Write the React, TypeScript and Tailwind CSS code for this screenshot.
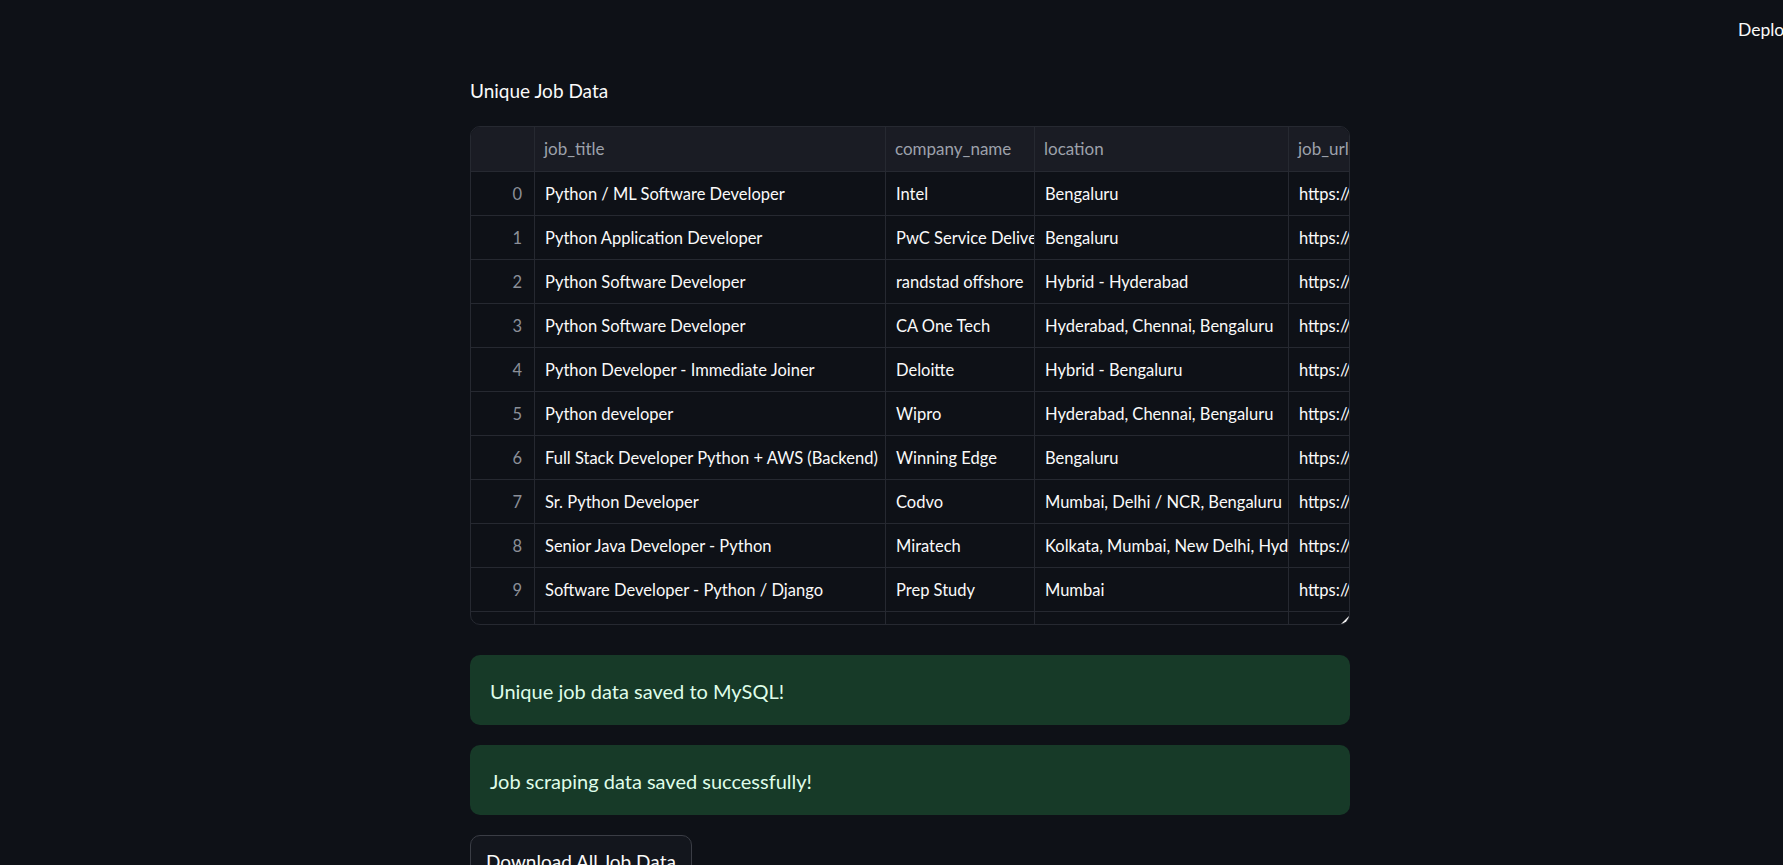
import React from 'react';

interface JobRow {
  title: string;
  company: string;
  location: string;
  url: string;
}

const rows: JobRow[] = [
  { title: 'Python / ML Software Developer', company: 'Intel', location: 'Bengaluru', url: 'https://www.naukri.com/job-listings' },
  { title: 'Python Application Developer', company: 'PwC Service Delivery Center', location: 'Bengaluru', url: 'https://www.naukri.com/job-listings' },
  { title: 'Python Software Developer', company: 'randstad offshore', location: 'Hybrid - Hyderabad', url: 'https://www.naukri.com/job-listings' },
  { title: 'Python Software Developer', company: 'CA One Tech', location: 'Hyderabad, Chennai, Bengaluru', url: 'https://www.naukri.com/job-listings' },
  { title: 'Python Developer - Immediate Joiner', company: 'Deloitte', location: 'Hybrid - Bengaluru', url: 'https://www.naukri.com/job-listings' },
  { title: 'Python developer', company: 'Wipro', location: 'Hyderabad, Chennai, Bengaluru', url: 'https://www.naukri.com/job-listings' },
  { title: 'Full Stack Developer Python + AWS (Backend)', company: 'Winning Edge', location: 'Bengaluru', url: 'https://www.naukri.com/job-listings' },
  { title: 'Sr. Python Developer', company: 'Codvo', location: 'Mumbai, Delhi / NCR, Bengaluru', url: 'https://www.naukri.com/job-listings' },
  { title: 'Senior Java Developer - Python', company: 'Miratech', location: 'Kolkata, Mumbai, New Delhi, Hyderabad', url: 'https://www.naukri.com/job-listings' },
  { title: 'Software Developer - Python / Django', company: 'Prep Study', location: 'Mumbai', url: 'https://www.naukri.com/job-listings' },
  { title: 'Senior Software Developer', company: 'Netlink Technologies', location: 'Hyderabad, Chennai, Bengaluru', url: 'https://www.naukri.com/job-listings' },
];

function Cell({ width, children }: { width: string; children: React.ReactNode }) {
  return (
    <div className={`${width} shrink-0 h-full flex items-center pl-[10px] pt-[1px] overflow-hidden whitespace-nowrap border-r border-[#262931]`}>
      {children}
    </div>
  );
}

function DataTable() {
  return (
    <div className="relative h-[499px] w-[880px] rounded-[10px] border border-[#262931] overflow-hidden bg-[#0e1117] text-[16.5px]">
      <div className="flex h-[45px] bg-[#1a1c24] border-b border-[#262931] text-[17px] text-[#9da1ab]">
        <div className="w-[64px] shrink-0 h-full border-r border-[#262931]" />
        <div className="w-[351px] shrink-0 h-full flex items-center pl-[9px] border-r border-[#262931]">job_title</div>
        <div className="w-[149px] shrink-0 h-full flex items-center pl-[9px] border-r border-[#262931]">company_name</div>
        <div className="w-[254px] shrink-0 h-full flex items-center pl-[9px] border-r border-[#262931]">location</div>
        <div className="w-[120px] shrink-0 h-full flex items-center pl-[9px]">job_url</div>
      </div>
      {rows.map((row, i) => (
        <div key={i} className="flex h-[44px] border-b border-[#262931] text-[#fafafa]">
          <div className="w-[64px] shrink-0 h-full flex items-center justify-end pr-[12px] pt-[1px] border-r border-[#262931] text-[#8b8f98]">{i}</div>
          <Cell width="w-[351px]">{row.title}</Cell>
          <Cell width="w-[149px]">{row.company}</Cell>
          <Cell width="w-[254px]">{row.location}</Cell>
          <div className="w-[120px] shrink-0 h-full flex items-center pl-[10px] pt-[1px] overflow-hidden whitespace-nowrap">{row.url}</div>
        </div>
      ))}
      <svg className="absolute right-0 bottom-0" width="8" height="8" viewBox="0 0 8 8">
        <path d="M8 0 L8 8 L0 8 Z" fill="#f5f5f5" />
      </svg>
    </div>
  );
}

function SuccessBox({ text }: { text: string }) {
  return (
    <div className="w-[880px] h-[70px] rounded-[10px] bg-[#173a28] flex items-center px-[20px] pt-[1px] text-[20px] text-[#dffde9]">
      {text}
    </div>
  );
}

export default function App() {
  return (
    <div className="h-[865px] w-full overflow-hidden bg-[#0e1117] text-[#fafafa] font-['Source_Sans_Pro','Lato',sans-serif]">
      <div className="h-[60px] flex items-center justify-end">
        <span className="text-[17.5px] text-[#fafafa] -mr-[10px]">Deploy</span>
      </div>
      <div className="flex justify-center pl-[37px]">
        <div className="w-[880px] flex flex-col">
          <h2 className="mt-[15px] h-[32px] flex items-center text-[19px] text-[#fafafa]">Unique Job Data</h2>
          <div className="mt-[19px]">
            <DataTable />
          </div>
          <div className="mt-[30px] flex flex-col gap-[20px]">
            <SuccessBox text="Unique job data saved to MySQL!" />
            <SuccessBox text="Job scraping data saved successfully!" />
          </div>
          <div className="mt-[20px]">
            <button className="h-[52px] min-w-[220px] rounded-[10px] border border-[#3a3d45] bg-[#13161d] px-[15px] pt-[2px] text-left text-[19px] whitespace-nowrap text-[#fafafa]">
              Download All Job Data
            </button>
          </div>
        </div>
      </div>
    </div>
  );
}
